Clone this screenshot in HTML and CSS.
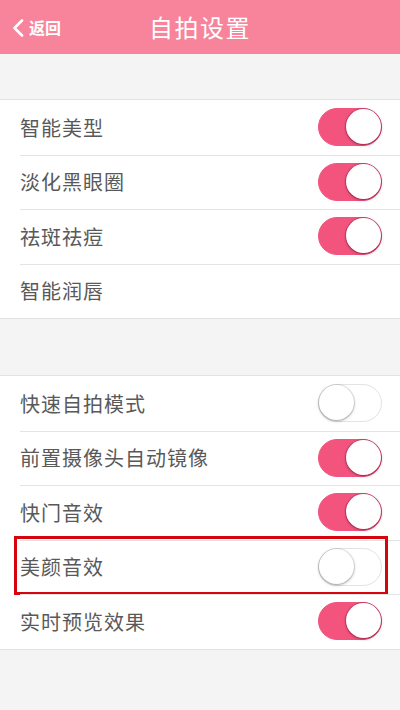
FILE: index.html
```html
<!DOCTYPE html>
<html lang="zh">
<head>
<meta charset="utf-8">
<link rel="stylesheet" href="styles.css">
</head>
<body>
<div class="app">
  <header class="nav">
    <div class="back">
      <svg class="chev" viewBox="0 0 12 18" width="12" height="18"><path d="M10 1.5 L2.5 9 L10 16.5" fill="none" stroke="#fff" stroke-width="2.6" stroke-linecap="round" stroke-linejoin="round"/></svg>
      <span>返回</span>
    </div>
    <div class="title">自拍设置</div>
  </header>
  <div class="gap gap1"></div>
  <ul class="group">
    <li class="row"><span class="label">智能美型</span><span class="toggle on"><i></i></span></li>
    <li class="row"><span class="label">淡化黑眼圈</span><span class="toggle on"><i></i></span></li>
    <li class="row"><span class="label">祛斑祛痘</span><span class="toggle on"><i></i></span></li>
    <li class="row"><span class="label">智能润唇</span></li>
  </ul>
  <div class="gap gap2"></div>
  <ul class="group">
    <li class="row"><span class="label">快速自拍模式</span><span class="toggle"><i></i></span></li>
    <li class="row"><span class="label">前置摄像头自动镜像</span><span class="toggle on"><i></i></span></li>
    <li class="row"><span class="label">快门音效</span><span class="toggle on"><i></i></span></li>
    <li class="row marked"><span class="label">美颜音效</span><span class="toggle"><i></i></span><span class="mark"></span></li>
    <li class="row"><span class="label">实时预览效果</span><span class="toggle on"><i></i></span></li>
  </ul>
  <div class="gap gap3"></div>
</div>
</body>
</html>
```
FILE: styles.css
```css
* { box-sizing: border-box; }
html, body { margin: 0; padding: 0; }
body {
  width: 400px;
  height: 710px;
  overflow: hidden;
  background: #f4f4f4;
  font-family: "Noto Sans CJK SC", "Noto Sans", sans-serif;
}
.app { display: flex; flex-direction: column; }
.nav {
  height: 54px;
  background: #f7849b;
  position: relative;
  display: flex;
  align-items: center;
  justify-content: center;
}
.back {
  position: absolute;
  left: 12px;
  top: 18px;
  display: flex;
  align-items: center;
  gap: 5px;
  color: #fff;
  font-size: 16px;
  font-weight: 600;
  line-height: 19px;
}
.title {
  color: #fff;
  font-size: 24px;
  letter-spacing: 1.5px;
  line-height: 30px;
}
.gap { background: #f4f4f4; }
.gap1 { height: 45px; }
.gap2 { height: 56px; }
.gap3 { flex: 1; height: 70px; }
.group {
  list-style: none;
  margin: 0;
  padding: 0;
  background: #fff;
  border-top: 1px solid #e2e2e2;
  border-bottom: 1px solid #e2e2e2;
}
.row {
  position: relative;
  height: 54.5px;
  display: flex;
  align-items: center;
  justify-content: space-between;
  padding: 0 18px 0 20px;
}
.row + .row::before {
  content: "";
  position: absolute;
  left: 20px;
  right: 0;
  top: 0;
  border-top: 1px solid #e4e4e4;
}
.label {
  color: #595959;
  font-size: 20px;
  letter-spacing: 1px;
}
.toggle {
  width: 64px;
  height: 38px;
  border-radius: 19px;
  background: #fff;
  border: 1.5px solid #e3e3e3;
  position: relative;
  flex: none;
}
.toggle i {
  position: absolute;
  left: 0;
  top: 0;
  width: 35px;
  height: 35px;
  border-radius: 50%;
  background: #fff;
  box-shadow: 0 1px 3px rgba(0,0,0,0.35), 0 0 0 1px rgba(0,0,0,0.08);
}
.toggle.on {
  background: #f2547d;
  border-color: #f2547d;
}
.toggle.on i {
  left: auto;
  right: 0;
  box-shadow: 0 1px 3px rgba(90,0,30,0.45), 0 0 0 1px rgba(150,30,70,0.35);
}
.mark {
  position: absolute;
  left: 14px;
  right: 12px;
  top: -4px;
  bottom: -1px;
  border: 3px solid #d6050d;
  pointer-events: none;
}
```
